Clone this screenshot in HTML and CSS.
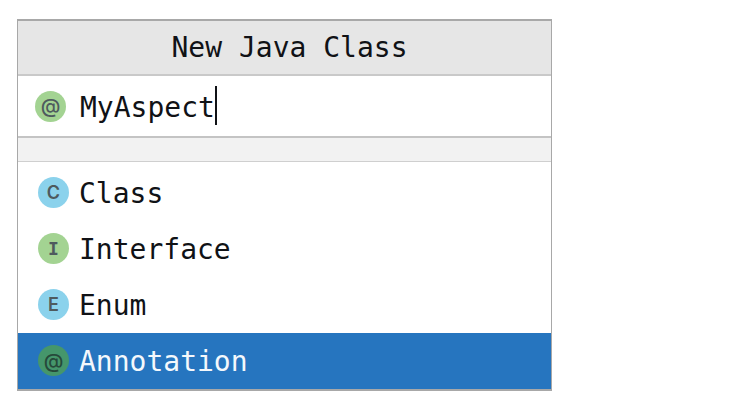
FILE: index.html
```html
<!DOCTYPE html>
<html lang="en">
<head>
    <meta charset="UTF-8">
    <title>New Java Class</title>
    <link rel="stylesheet" href="styles.css">
</head>
<body>
    <div class="dialog">
        <div class="title">New Java Class</div>
        <div class="name-row">
            <span class="badge green at">@</span>
            <span class="label name-text">MyAspect</span><span class="caret"></span>
        </div>
        <div class="spacer"></div>
        <ul class="list">
            <li class="item"><span class="badge blue">C</span><span class="label">Class</span></li>
            <li class="item"><span class="badge green serif">I</span><span class="label">Interface</span></li>
            <li class="item"><span class="badge blue">E</span><span class="label">Enum</span></li>
            <li class="item selected"><span class="badge dark at">@</span><span class="label">Annotation</span></li>
        </ul>
    </div>
</body>
</html>
```

FILE: styles.css
```css
body, html{
    margin: 0;
    padding: 0;
    background-color: white;
}
body{
    padding: 19px 0 0 17px;
}
.dialog{
    display: flex;
    flex-direction: column;
    box-sizing: border-box;
    width: 535px;
    height: 372px;
    border: 2px solid #a8a8a8;
    border-right-width: 1px;
    border-left-width: 1px;
    font-family: "DejaVu Sans Mono", monospace;
    font-size: 28px;
    color: #101216;
}
.title{
    height: 53px;
    line-height: 54px;
    padding-left: 10px;
    text-align: center;
    background-color: #e6e6e6;
    border-bottom: 2px solid #c9c9c9;
}
.name-row{
    display: flex;
    align-items: center;
    height: 60px;
    padding-left: 17px;
    border-bottom: 2px solid #c4c4c4;
}
.label{
    padding-top: 2px;
}
.name-text{
    margin-left: 14px;
}
.caret{
    width: 2px;
    height: 39px;
    margin-top: -1px;
    background-color: #101216;
}
.spacer{
    height: 23px;
    background-color: #f2f2f2;
    border-bottom: 1px solid #cfcfcf;
}
.list{
    flex: 1;
    display: flex;
    flex-direction: column;
    list-style: none;
    margin: 0;
    padding: 2px 0 0 0;
}
.item{
    flex: 1;
    display: flex;
    align-items: center;
    gap: 10px;
    padding-left: 20px;
}
.selected{
    background-color: #2675bf;
    color: #f4f8fc;
}
.badge{
    display: flex;
    align-items: center;
    justify-content: center;
    width: 31px;
    height: 31px;
    border-radius: 50%;
    font-family: Inter, sans-serif;
    font-size: 18px;
    font-weight: 600;
    color: #4e5a5e;
}
.serif{
    font-family: "DejaVu Sans Mono", monospace;
    font-size: 18px;
}
.at{
    font-size: 20px;
    font-weight: 500;
}
.green{
    background-color: #a3d392;
}
.blue{
    background-color: #8bd2ec;
}
.dark{
    background-color: #45966b;
    color: #26493a;
}
```
